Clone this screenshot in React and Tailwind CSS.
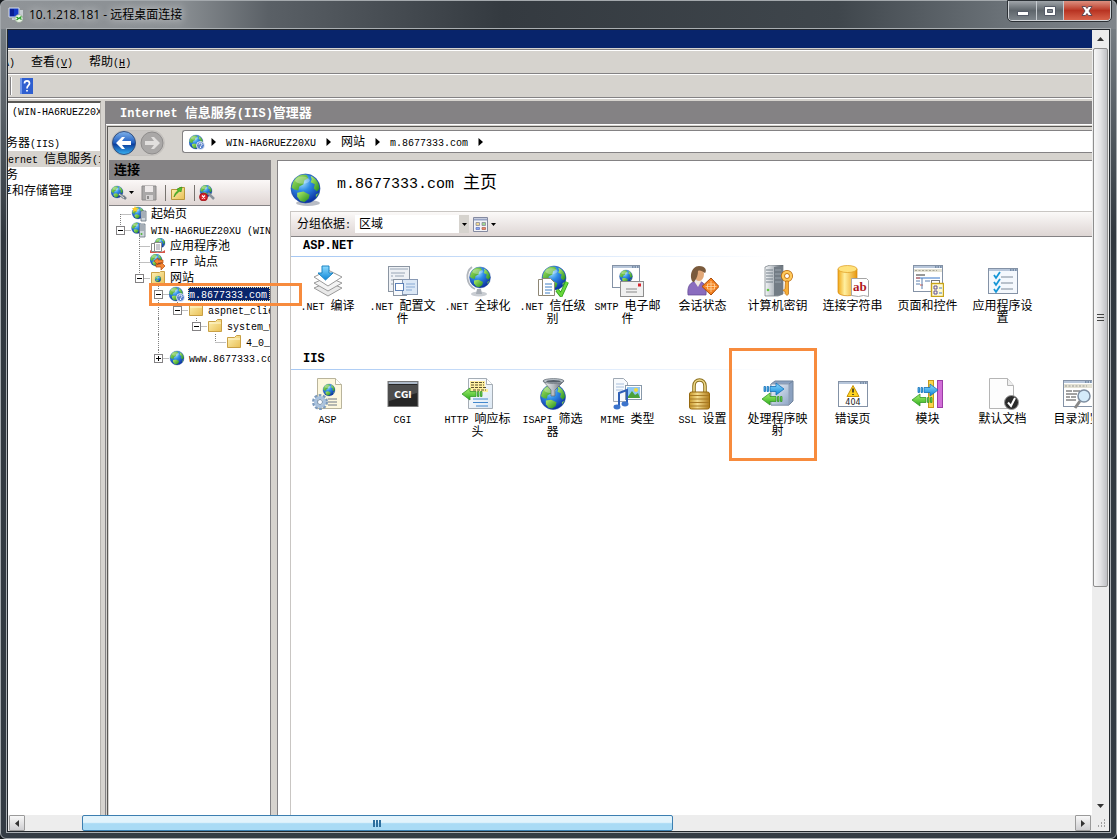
import React, { useState } from 'react';

const CJK = "font-['Liberation_Sans','Noto_Sans_CJK_SC',sans-serif]";
const MONO = "font-['Liberation_Mono','Noto_Sans_CJK_SC',monospace]";

// Latin runs are half the width of a Chinese character, so they get their own size
function Txt({ children, latin = 'text-[10px]' }) {
  return children.split(/([\x20-\x7e]+)/).filter(Boolean).map((part, i) =>
    /^[\x20-\x7e]/.test(part)
      ? <span key={i} className={`${MONO} ${latin} leading-none`}>{part}</span>
      : <span key={i}>{part}</span>
  );
}

function Gradients() {
  return (
    <svg className="absolute w-0 h-0" aria-hidden="true">
      <defs>
        <radialGradient id="sea" cx="0.38" cy="0.28" r="0.75">
          <stop offset="0" stopColor="#a8e6ff" />
          <stop offset="0.4" stopColor="#2f8be6" />
          <stop offset="1" stopColor="#0a2b9c" />
        </radialGradient>
        <linearGradient id="land" x1="0" y1="0" x2="1" y2="1">
          <stop offset="0" stopColor="#b4ee6a" />
          <stop offset="1" stopColor="#1c8a1c" />
        </linearGradient>
        <linearGradient id="gold" x1="0" y1="0" x2="1" y2="0">
          <stop offset="0" stopColor="#f0a818" />
          <stop offset="0.35" stopColor="#fff0a0" />
          <stop offset="1" stopColor="#e8960c" />
        </linearGradient>
        <linearGradient id="brass" x1="0" y1="0" x2="1" y2="0">
          <stop offset="0" stopColor="#c8982c" />
          <stop offset="0.4" stopColor="#f4dc8c" />
          <stop offset="1" stopColor="#b07c1c" />
        </linearGradient>
        <linearGradient id="folder" x1="0" y1="0" x2="1" y2="1">
          <stop offset="0" stopColor="#fdf2b4" />
          <stop offset="1" stopColor="#e9bf55" />
        </linearGradient>
        <linearGradient id="steel" x1="0" y1="0" x2="1" y2="0">
          <stop offset="0" stopColor="#f4f6f8" />
          <stop offset="0.5" stopColor="#b4bac0" />
          <stop offset="1" stopColor="#59616a" />
        </linearGradient>
        <linearGradient id="blueArrow" x1="0" y1="0" x2="0" y2="1">
          <stop offset="0" stopColor="#8fdcff" />
          <stop offset="1" stopColor="#0c86d8" />
        </linearGradient>
        <linearGradient id="greenArrow" x1="0" y1="0" x2="0" y2="1">
          <stop offset="0" stopColor="#a8f070" />
          <stop offset="1" stopColor="#2cae1c" />
        </linearGradient>
        <linearGradient id="page" x1="0" y1="0" x2="1" y2="1">
          <stop offset="0" stopColor="#ffffff" />
          <stop offset="1" stopColor="#dce8f4" />
        </linearGradient>
        <linearGradient id="panel" x1="0" y1="0" x2="1" y2="1">
          <stop offset="0" stopColor="#f2f6fb" />
          <stop offset="1" stopColor="#8ea6c6" />
        </linearGradient>
        <linearGradient id="navBlue" x1="0" y1="0" x2="0" y2="1">
          <stop offset="0" stopColor="#7fb2ea" />
          <stop offset="0.5" stopColor="#1d5cc0" />
          <stop offset="0.55" stopColor="#0b3c9c" />
          <stop offset="1" stopColor="#38b4f4" />
        </linearGradient>
      </defs>
    </svg>
  );
}

// Globe drawn on a 32 unit circle, placed by centre and scale
function Globe({ x = 16, y = 16, r = 14 }) {
  const s = r / 14;
  return (
    <g transform={`translate(${x} ${y}) scale(${s})`}>
      <circle r="14" fill="url(#sea)" stroke="#1d4aa0" strokeWidth="0.6" />
      <path d="M-12 -6C-9 -12 -4 -14 1 -13L3 -10L-1 -8L-2 -4L-6 -2L-7 2L-11 1L-13.500 -1Z" fill="url(#land)" />
      <path d="M-8 4L-2 3L4 6L3 10L-1 13L-5 12L-8 8Z" fill="url(#land)" />
      <path d="M5 -12C10 -10 13 -6 13.500 0L11 3L8 0L9 -4L5 -6L6 -9Z" fill="url(#land)" />
      <path d="M10 6L13 4L10 9Z" fill="url(#land)" />
      <ellipse cx="-3" cy="-8" rx="7" ry="3.500" fill="#fff" opacity="0.3" />
    </g>
  );
}

function Arrow({ dir, x, y }) {
  return dir === 'right' ? (
    <g transform={`translate(${x} ${y})`} fill="url(#blueArrow)" stroke="#1470b8" strokeWidth="0.8">
      <path d="M0 3.500h1.500v5H0zM3 3.500h1.500v5H3zM6 3.500h6V0l8 6l-8 6V8.500H6z" />
    </g>
  ) : (
    <g transform={`translate(${x} ${y})`} fill="url(#greenArrow)" stroke="#35982a" strokeWidth="0.8">
      <path d="M20 3.500h-1.500v5H20zM17 3.500h-1.500v5H17zM14 3.500H8V0L0 6l8 6V8.500h6z" />
    </g>
  );
}

function MiniWindow({ x = 1, y = 3, w = 30, h = 25, fill = '#fff' }) {
  return (
    <g>
      <rect x={x + 0.5} y={y + 0.5} width={w - 1} height={h - 1} fill={fill} stroke="#8492a6" />
      <rect x={x + 1} y={y + 1} width={w - 2} height="2" fill="#b7c6da" />
      <path d={`M${x + w - 8} ${y + 2}h1.500m1 0h1.500m1 0h1.500`} stroke="#3f5878" />
    </g>
  );
}

const drawings = {
  compile: (
    <g stroke="#9a9a9a" strokeWidth="1">
      <path d="M2 23l14-6l14 6l-14 8z" fill="#e9e9e9" />
      <path d="M2 18l14-6l14 6l-14 8z" fill="#f4f4f4" />
      <path d="M2 12l14-7l14 7l-14 9z" fill="#fff" />
      <path d="M10 1h7v7h4l-7.500 7L6 8h4z" fill="url(#blueArrow)" stroke="#1b84c4" />
    </g>
  ),
  config: (
    <g>
      <rect x="1.500" y="1.500" width="21" height="25" fill="#eef1f5" stroke="#8b95a2" />
      <path d="M3 4h18M4 8h14M4 11h2M8 11h9M4 15h2M4 19h2" stroke="#98a5b5" />
      <rect x="6.500" y="14.500" width="13" height="16" fill="#f7f9fc" stroke="#8b95a2" />
      <rect x="15.500" y="14.500" width="15" height="15" fill="#dce8f6" stroke="#8899b4" />
      <rect x="8.500" y="18.500" width="8" height="7" fill="#fff" stroke="#5c80b6" />
      <path d="M19 19h9M19 22h9M19 25h6" stroke="#87a9d4" />
    </g>
  ),
  global: (
    <g>
      <ellipse cx="17" cy="29" rx="8" ry="2.500" fill="#c9cdd2" />
      <path d="M15 24h4l1 5h-6z" fill="#a7adb5" />
      <path d="M10 2C3 7 4 20 13 24" fill="none" stroke="#b1b6bd" strokeWidth="1.800" />
      <Globe x={18} y={12.500} r={10.500} />
    </g>
  ),
  trust: (
    <g>
      <Globe x={17} y={13} r={12} />
      <path d="M1.500 14.500h10v16h-10z" fill="#fff" stroke="#8e8775" />
      <path d="M5.500 13.500h8l4 4v13h-12z" fill="#fff" stroke="#8e8775" />
      <path d="M8 19h7M8 22h7M8 25h7M8 28h5" stroke="#3f7ec4" />
      <path d="M20 25l4 5l6-13" fill="none" stroke="#2e9e1e" strokeWidth="4" />
      <path d="M20 25l4 5l6-13" fill="none" stroke="#6ad83c" strokeWidth="2.400" />
    </g>
  ),
  smtp: (
    <g>
      <MiniWindow x={0} y={0} w={28} h={23} />
      <Globe x={14} y={11.500} r={6.500} />
      <rect x="8.500" y="16.500" width="23" height="15" fill="#f0f0f0" stroke="#8d8d8d" />
      <path d="M14 24h11M14 27h11" stroke="#888" />
      <rect x="26" y="18.500" width="3" height="3" fill="#d8232c" />
    </g>
  ),
  session: (
    <g>
      <path d="M1 30c-1-9 2-13 9-14c7 0 10 5 9 14z" fill="#8a6cbe" stroke="#604690" strokeWidth="0.700" />
      <path d="M7 16l4 6l4-7z" fill="#f1e7de" />
      <ellipse cx="12" cy="9" rx="5" ry="7" fill="#e2a878" />
      <path d="M6 17C2 13 4 1 12 1c7 0 8 5 6 7c-3-2-5-3-7-2c0 4-1 7-4 11z" fill="#7a5a3c" />
      <path d="M24 13l8 8.500l-8 8.500l-9-8.500z" fill="#f58220" stroke="#a84a08" />
      <path d="M24 16v11M18.500 21.500h11M20.500 19h7v5h-7z" stroke="#ffd8a4" strokeWidth="0.800" fill="none" />
    </g>
  ),
  machineKey: (
    <g>
      <path d="M3 2l5-2h13v29l-5 2H3z" fill="url(#steel)" stroke="#6d757d" strokeWidth="0.700" />
      <path d="M12 2l9-1v28l-9 2z" fill="#737c85" />
      <path d="M4 5h7M4 8h7M4 11h7M4 14h7M4 17h7" stroke="#75808a" />
      <path d="M13 5h6M13 9h6M13 13h6M13 17h6" stroke="#9ba4ad" />
      <circle cx="6" cy="25" r="1.300" fill="#63c744" />
      <circle cx="25" cy="11" r="4" fill="none" stroke="#b86608" strokeWidth="4" />
      <circle cx="25" cy="11" r="4" fill="none" stroke="#ffc95c" strokeWidth="2.600" />
      <path d="M23.500 16h3v13l-1.500 1.500l-2-2v-2l-2-1l2-2z" fill="#f7ae38" stroke="#b86608" strokeWidth="0.700" />
    </g>
  ),
  connString: (
    <g>
      <path d="M1 4v23c0 5 19 5 19 0V4z" fill="url(#gold)" stroke="#d6870d" strokeWidth="0.700" />
      <ellipse cx="10.500" cy="4" rx="9.500" ry="3.500" fill="#ffe27c" stroke="#dc9b20" strokeWidth="0.700" />
      <path d="M14.500 13.500h15l2 2v16l-5-1l-5 1l-7-1z" fill="#fff" stroke="#a5a5a5" />
      <text x="16" y="26" fontSize="13" fontWeight="bold" fill="#b0181e" fontFamily="Liberation Serif, serif">ab</text>
    </g>
  ),
  pages: (
    <g>
      <MiniWindow x={1} y={0} w={30} h={27} />
      <path d="M2 4h28v3H2z" fill="#e4e2d4" />
      <path d="M3 5.500h22" stroke="#a8a698" strokeDasharray="2 1.500" />
      <path d="M4 10h9" stroke="#333" />
      <path d="M4 13h24" stroke="#3574c9" />
      <path d="M4 13h4M8 20h3" stroke="#e05038" />
      <path d="M10 13v11M4 16h4M4 19h4M13 16h5" stroke="#5a7fae" />
      <rect x="19.500" y="15.500" width="8" height="3" fill="#fff" stroke="#777" />
      <rect x="19.500" y="18.500" width="12" height="13" fill="#fffbd4" stroke="#c7a31a" strokeWidth="1.400" />
      <path d="M22 21h3v3h-3zM22 26h3v3h-3z" fill="none" stroke="#5c4f98" />
      <path d="M27 23h3M27 28h3" stroke="#4d7dc0" />
    </g>
  ),
  settings: (
    <g>
      <MiniWindow x={1} y={3} w={30} h={26} fill="#f4f8fd" />
      <path d="M7 10l2 3l4-6M7 17l2 3l4-6M7 24l2 3l4-6" fill="none" stroke="#1496d6" strokeWidth="1.800" />
      <path d="M14 12h12M14 18h12M14 24h12" stroke="#7d8a9a" />
    </g>
  ),
  asp: (
    <g>
      <path d="M5.500 0.500h18l6 6v24h-24z" fill="#fdf7dd" stroke="#b9b49c" />
      <path d="M23.500 0.500v6h6" fill="#fff" stroke="#b9b49c" />
      <Globe x={17} y={12} r={6} />
      <path d="M16 21h9M16 24h9M16 27h9" stroke="#6d7685" />
      <circle cx="8" cy="24" r="6.500" fill="none" stroke="#7d9bbd" strokeWidth="3" strokeDasharray="2.600 1.480" />
      <circle cx="8" cy="24" r="4.500" fill="none" stroke="#a9c2de" strokeWidth="3" />
      <circle cx="8" cy="24" r="2.500" fill="#fff" stroke="#7693b5" />
    </g>
  ),
  cgi: (
    <g>
      <rect x="1" y="3.500" width="30" height="25" fill="#262626" stroke="#777" />
      <path d="M1.500 4h29v2h-29z" fill="#aebac9" />
      <path d="M2 7h28v8L2 23z" fill="#4d4d4d" />
      <text x="16" y="20" textAnchor="middle" fontSize="9" fontWeight="bold" fill="#fff" fontFamily="DejaVu Sans, sans-serif">CGI</text>
    </g>
  ),
  http: (
    <g>
      <path d="M6.500 0.500h18l6 6v24h-24z" fill="url(#page)" stroke="#a5adb5" />
      <path d="M24.500 0.500v6h6" fill="#fff" stroke="#a5adb5" />
      <path d="M8 3h15v8h3v3H8z" fill="#fff0a0" />
      <path d="M9 4.500h13M9 7h13M9 9.500h16M11 12h13" stroke="#5b5230" strokeDasharray="3 1" />
      <path d="M11 21h15M11 24.500h15M14 28h12" stroke="#4488cc" />
      <Arrow dir="left" x={0} y={10} />
    </g>
  ),
  isapi: (
    <g>
      <Globe x={16} y={19} r={12.500} />
      <path d="M6 3l8 9v6h4v-6l9-9z" fill="url(#steel)" stroke="#5d6670" strokeWidth="0.700" />
      <ellipse cx="16.500" cy="3" rx="10.500" ry="2.400" fill="#bcc4cb" stroke="#5d6670" strokeWidth="0.700" />
      <ellipse cx="16.500" cy="3.300" rx="7.500" ry="1.300" fill="#56606a" />
    </g>
  ),
  mime: (
    <g>
      <path d="M1.500 0.500h10l4 4v19h-14z" fill="#f7fafd" stroke="#a0a9b4" />
      <path d="M4 6h8M4 9h8M4 12h7" stroke="#a8bfdc" />
      <rect x="13.500" y="7.500" width="16" height="14" fill="#fff" stroke="#8899aa" />
      <rect x="15" y="9" width="13" height="11" fill="#8fc8f4" />
      <path d="M15 20l5-7l3 4l3-2l2 5z" fill="#4ba23a" />
      <circle cx="24" cy="12" r="2" fill="#f4d83c" />
      <path d="M7 28V15l8-3v13" fill="none" stroke="#2e5fb6" strokeWidth="2" />
      <ellipse cx="5" cy="29" rx="3.500" ry="2.400" fill="#3c74cc" />
      <ellipse cx="13" cy="26" rx="3.500" ry="2.400" fill="#3c74cc" />
    </g>
  ),
  ssl: (
    <g>
      <path d="M7 15V8c0-8 11-8 11 0v7" fill="none" stroke="#8a6f1c" strokeWidth="3.600" />
      <path d="M7 15V8c0-8 11-8 11 0v7" fill="none" stroke="#efd98c" strokeWidth="1.600" />
      <rect x="2.500" y="14" width="20" height="17" rx="2" fill="url(#brass)" stroke="#97690f" />
      <path d="M3 17.500h19M3 21h19M3 24.500h19M3 28h19" stroke="#a87a24" />
    </g>
  ),
  handler: (
    <g>
      <path d="M9 6l4-3h18v20l-4 4H9z" fill="#8ba1c0" stroke="#71849c" />
      <path d="M9 6h18v21H9z" fill="url(#panel)" stroke="#8d9db2" />
      <path d="M27 6l4-3" stroke="#71849c" />
      <Arrow dir="right" x={2} y={5} />
      <Arrow dir="left" x={0} y={15} />
    </g>
  ),
  error: (
    <g>
      <MiniWindow x={1} y={3} w={30} h={26} />
      <path d="M16 7.500l6 11h-12z" fill="#ffd41f" stroke="#c79206" strokeLinejoin="round" />
      <path d="M16 10.500v4M16 16v1" stroke="#222" strokeWidth="1.500" />
      <text x="16" y="27" textAnchor="middle" fontSize="8" fill="#222" fontFamily="DejaVu Sans, sans-serif">404</text>
    </g>
  ),
  modules: (
    <g>
      <rect x="16.500" y="2.500" width="5" height="27" fill="#f9d64c" stroke="#c79a1c" />
      <rect x="25.500" y="2.500" width="5" height="27" fill="#d26ed8" stroke="#9c3ea6" />
      <Arrow dir="right" x={6} y={6} />
      <Arrow dir="left" x={0} y={16} />
    </g>
  ),
  defaultDoc: (
    <g>
      <path d="M2.500 0.500h18l6 7v23h-24z" fill="#fdfdfd" stroke="#b5b5b5" />
      <path d="M20.500 0.500v7h6" fill="#eee" stroke="#b5b5b5" />
      <circle cx="24.500" cy="24.500" r="7" fill="#2b2b2b" stroke="#999" />
      <path d="M21 24.500l3 3.500l4-8" fill="none" stroke="#fff" strokeWidth="2" />
    </g>
  ),
  browse: (
    <g>
      <MiniWindow x={1} y={2} w={30} h={27} />
      <path d="M2 6h28v4H2z" fill="#e4e2d4" />
      <path d="M3 8h22" stroke="#999" strokeDasharray="2 1.500" />
      <path d="M4 13h6M11 13h7M4 16h11M4 19h4M9 19h5M4 22h10" stroke="#444" />
      <path d="M18 23l-5 7" stroke="#888" strokeWidth="3" />
      <circle cx="22" cy="18" r="6" fill="#d4ebfa" stroke="#7d8da0" strokeWidth="1.500" />
    </g>
  ),
};

const groups = [
  {
    title: 'ASP.NET',
    items: [
      ['compile', '.NET 编译'],
      ['config', '.NET 配置文件'],
      ['global', '.NET 全球化'],
      ['trust', '.NET 信任级别'],
      ['smtp', 'SMTP 电子邮件'],
      ['session', '会话状态'],
      ['machineKey', '计算机密钥'],
      ['connString', '连接字符串'],
      ['pages', '页面和控件'],
      ['settings', '应用程序设置'],
    ],
  },
  {
    title: 'IIS',
    items: [
      ['asp', 'ASP'],
      ['cgi', 'CGI'],
      ['http', 'HTTP 响应标头'],
      ['isapi', 'ISAPI 筛选器'],
      ['mime', 'MIME 类型'],
      ['ssl', 'SSL 设置'],
      ['handler', '处理程序映射'],
      ['error', '错误页'],
      ['modules', '模块'],
      ['defaultDoc', '默认文档'],
      ['browse', '目录浏览'],
    ],
  },
];

// 16px icons for the tree and the toolbars
const small = {
  start: (
    <g>
      <Globe x={7} y={7} r={6} />
      <path d="M4 0l1 2l2 0l-1.500 2l0.500 2l-2-1l-2 1l0.500-2L1 2l2 0z" fill="#ffc928" />
      <path d="M10 5h5v10h-5z" fill="#cdd5dc" stroke="#66717c" strokeWidth="0.800" />
      <path d="M11 7h3M11 9h3M11 11h3" stroke="#6a757f" strokeWidth="0.800" />
    </g>
  ),
  server: (
    <g>
      <Globe x={6} y={6} r={5.500} />
      <path d="M8.500 2h5.500v13H8.500z" fill="#cdd5dc" stroke="#66717c" strokeWidth="0.800" />
      <path d="M9 4h4M9 6h4M9 8h4" stroke="#6a757f" strokeWidth="0.800" />
      <circle cx="10.500" cy="12" r="1" fill="#52b43a" />
    </g>
  ),
  pool: (
    <g>
      <path d="M0 12c3 3 12 3 15 0v3H0z" fill="#d8564a" />
      <Globe x={10} y={5} r={5} />
      <path d="M1.500 5.500h7v8h-7z" fill="#fff" stroke="#888" />
      <path d="M4.500 4.500h7v9h-7z" fill="#fff" stroke="#888" />
      <path d="M6 7h4M6 9h4M6 11h4" stroke="#778" strokeWidth="0.800" />
    </g>
  ),
  ftp: (
    <g>
      <Globe x={6} y={6} r={6} />
      <path d="M4 7l4-3v2h5v3H8v2zM15 12l-4-4v2H6v3h5v3z" fill="#f58634" stroke="#b04c10" strokeWidth="0.700" />
    </g>
  ),
  sites: (
    <g>
      <path d="M1.500 2.500h8l1-1h4v13h-13z" fill="url(#folder)" stroke="#c9a045" />
      <Globe x={8} y={9} r={3} />
    </g>
  ),
  siteHelp: (
    <g>
      <Globe x={7} y={8} r={7} />
      <circle cx="11.500" cy="11.500" r="4" fill="#5b83cc" stroke="#fff" strokeWidth="0.800" />
      <path d="M10 10.500c0-2 3-2 3 0c0 1-1.500 1-1.500 2M11.500 13v1" fill="none" stroke="#fff" />
    </g>
  ),
  site: <Globe x={8} y={8} r={7} />,
  folder: (
    <g>
      <path d="M1.500 3.500h7l2-2h4v12h-13z" fill="url(#folder)" stroke="#c9a045" />
      <path d="M2 5h12" stroke="#fff9d8" />
    </g>
  ),
  connect: (
    <g>
      <Globe x={6} y={7} r={6} />
      <path d="M8 9l5 4M12 11l3 3" stroke="#777f88" strokeWidth="2.500" />
      <path d="M8 9l5 4" stroke="#d9dde2" />
    </g>
  ),
  save: (
    <g>
      <path d="M1 1h14v14H1z" fill="#a9a7a7" stroke="#8b8989" />
      <path d="M4 1h8v6H4z" fill="#eeeaea" />
      <path d="M5 10h7v5H5z" fill="#d7d4d4" />
      <path d="M6 11h2v3H6z" fill="#8b8989" />
    </g>
  ),
  up: (
    <g>
      <path d="M1.500 4.500h6l2-2h5v12h-13z" fill="url(#folder)" stroke="#b8963c" />
      <path d="M4 12c1-4 2-5 4-6L7 4l5-2l-1 5l-1-1c-2 1-4 3-6 6z" fill="#4fc02c" stroke="#2b8a16" strokeWidth="0.600" />
    </g>
  ),
  stop: (
    <g>
      <Globe x={7} y={6} r={6} />
      <path d="M9 8l6 6" stroke="#8a929b" strokeWidth="2.500" />
      <circle cx="4.500" cy="12" r="4" fill="#d8232c" stroke="#8e0d14" strokeWidth="0.700" />
      <path d="M3 10.500l3 3M6 10.500l-3 3" stroke="#fff" strokeWidth="1.300" />
    </g>
  ),
};

const Icon16 = ({ name }) => (
  <svg viewBox="0 0 16 16" className="w-4 h-4 shrink-0">{small[name]}</svg>
);

const Caret = () => (
  <svg viewBox="0 0 5 3" className="w-[5px] h-[3px] shrink-0"><path d="M0 0h5L2.500 3z" fill="#000" /></svg>
);

const tree = [
  { guides: [], icon: 'start', label: '起始页', first: true },
  { guides: [], box: '-', icon: 'server', label: 'WIN-HA6RUEZ20XU (WIN', last: true },
  { guides: [0], icon: 'pool', label: '应用程序池' },
  { guides: [0], icon: 'ftp', label: 'FTP 站点' },
  { guides: [0], box: '-', icon: 'sites', label: '网站', last: true },
  { guides: [0, 0], box: '-', icon: 'siteHelp', label: 'm.8677333.com', selected: true },
  { guides: [0, 0, 1], box: '-', icon: 'folder', label: 'aspnet_client', last: true },
  { guides: [0, 0, 1, 0], box: '-', icon: 'folder', label: 'system_web', last: true },
  { guides: [0, 0, 1, 0, 0], icon: 'folder', label: '4_0_30319', last: true },
  { guides: [0, 0], box: '+', icon: 'site', label: 'www.8677333.com', last: true },
];

function TreeRow({ node }) {
  const glyph = (
    <svg viewBox="0 0 15 16" className="block w-[15px] h-4">
      <path d={`M4.500 ${node.first ? 8 : 0}V${node.last ? 8 : 16}M4.500 8.500H15`} stroke="#808080" strokeDasharray="1 1" fill="none" />
      {node.box && <rect x="0.500" y="4.500" width="8" height="8" fill="#fff" stroke="#848284" />}
      {node.box && <path d={node.box === '+' ? 'M2 8.500h5M4.500 6v5' : 'M2 8.500h5'} stroke="#000" />}
    </svg>
  );
  return (
    <li className="flex items-center h-4 pl-[7px] whitespace-nowrap">
      {node.guides.map((on, i) => (
        <span key={i} className="w-[19px] h-4 pl-1 shrink-0">
          {on === 1 && <span className="block h-full border-l border-dotted border-[#808080]" />}
        </span>
      ))}
      {node.box
        ? <button type="button" aria-label={`展开 ${node.label}`} className="shrink-0">{glyph}</button>
        : <span className="shrink-0">{glyph}</span>}
      <Icon16 name={node.icon} />
      <span className={node.selected
        ? 'ml-[3px] pl-px flex-1 h-[14px] leading-[14px] bg-[#08246b] text-white outline-1 -outline-offset-1 outline-dotted outline-[#f7db94]'
        : 'ml-1 leading-4'}>
        <Txt>{node.label}</Txt>
      </span>
    </li>
  );
}

function TitleBar() {
  return (
    <header className="flex items-start h-7 pl-[7px] pr-[5px] shrink-0">
      <div className="flex items-center gap-[5px] h-7">
        <svg viewBox="0 0 16 16" className="w-4 h-4">
          <path d="M1 1h10v9H1z" fill="#1338c4" stroke="#d8dfe8" />
          <path d="M2 2h4v7H2z" fill="#0a1f94" />
          <path d="M12 3h3v6h-3zM4 11h5v2H4z" fill="#c9ced4" />
          <circle cx="11" cy="11.500" r="4" fill="#e8f4e4" stroke="#8a998a" strokeWidth="0.600" />
          <path d="M8.500 10l2 1.500l-2 1.500M13.500 9.500l-2 1.500l2 1.500" fill="none" stroke="#1d9a1d" strokeWidth="1.200" />
        </svg>
        <h1 className="text-xs text-black font-['Open_Sans','Noto_Sans_CJK_SC',sans-serif] [text-shadow:0_0_8px_#ffffff]">10.1.218.181 - 远程桌面连接</h1>
      </div>
      <div className="flex ml-auto h-5 rounded-b-[4px] border border-t-0 border-[#d0d4d8] overflow-hidden divide-x divide-[#c5cacf] outline-1 outline-[#2b3035]">
        <button type="button" aria-label="最小化" className="w-7 flex justify-center bg-linear-to-b from-[#a0a5aa] via-[#5e656b] to-[#7d848a]">
          <svg viewBox="0 0 12 20" className="w-3 h-5"><rect x="0.500" y="10.500" width="11" height="4" fill="#fff" stroke="#555b68" /></svg>
        </button>
        <button type="button" aria-label="最大化" className="w-[27px] flex justify-center bg-linear-to-b from-[#a0a5aa] via-[#5e656b] to-[#7d848a]">
          <svg viewBox="0 0 12 20" className="w-3 h-5">
            <path d="M0.500 5.500h11v9H0.500z" fill="#fff" stroke="#555b68" />
            <path d="M3.500 8.500h5v3h-5z" fill="#7d848a" stroke="#555b68" />
          </svg>
        </button>
        <button type="button" aria-label="关闭" className="w-[46px] flex justify-center bg-linear-to-b from-[#dc8f80] via-[#b83322] to-[#d8624a]">
          <svg viewBox="0 0 12 20" className="w-3 h-5">
            <path d="M1 5.500h3.500L6 7.500L7.500 5.500H11L8 10l3 4.500H7.500L6 12.500L4.500 14.500H1L4 10z" fill="#fff" stroke="#55424e" strokeWidth="0.900" />
          </svg>
        </button>
      </div>
    </header>
  );
}

const Divider = () => (
  <div className="h-0.5 shrink-0 border-t border-[#848284] bg-white" />
);

function MenuBar() {
  return (
    <nav className="flex items-center gap-4 h-[22px] shrink-0 overflow-hidden">
      <button type="button" className="-ml-[11px]"><Txt>(A)</Txt></button>
      <button type="button"><Txt>查看</Txt><span className={`${MONO} text-[10px]`}>(<u>V</u>)</span></button>
      <button type="button"><Txt>帮助</Txt><span className={`${MONO} text-[10px]`}>(<u>H</u>)</span></button>
    </nav>
  );
}

function ServerPane() {
  return (
    <aside className="w-[93px] mr-1 shrink-0 bg-white border-t-2 border-t-[#5a5855] border-r border-r-[#b5b2ad] overflow-hidden">
      <ul className="leading-4 whitespace-nowrap">
        <li className="h-4 pl-1"><Txt>(WIN-HA6RUEZ20X</Txt></li>
        <li className="h-4" />
        <li className="h-4"><span className="-ml-0.5"><Txt>务器(IIS)</Txt></span></li>
        <li className="h-4 bg-[#d6d3ce]"><Txt>ernet 信息服务(I</Txt></li>
        <li className="h-4"><span className="-ml-0.5"><Txt>务</Txt></span></li>
        <li className="h-4"><span className="-ml-2"><Txt>享和存储管理</Txt></span></li>
      </ul>
    </aside>
  );
}

const Crumb = () => (
  <svg viewBox="0 0 5 8" className="w-[5px] h-2 mx-2.5"><path d="M0.500 0v8L5 4z" fill="#000" /></svg>
);

function AddressRow() {
  return (
    <div className="flex items-start h-[33px] pt-[3px] pl-[3px] shrink-0">
      <div className="flex items-center gap-1 rounded-full border border-[#c5c2be] bg-[#c9c6c3]">
        <button type="button" aria-label="后退" className="w-6 h-6">
          <svg viewBox="0 0 24 24" className="w-6 h-6">
            <circle cx="12" cy="12" r="11.500" fill="url(#navBlue)" stroke="#34507e" />
            <path d="M4 12l6-6h3l-3 4h9v4h-9l3 4h-3z" fill="#fff" />
          </svg>
        </button>
        <button type="button" aria-label="前进" className="w-6 h-6">
          <svg viewBox="0 0 24 24" className="w-6 h-6">
            <circle cx="12" cy="12" r="11" fill="#aaa8a7" stroke="#8f8d8c" />
            <path d="M20 12l-6-6h-3l3 4H5v4h9l-3 4h3z" fill="#e2e0de" />
          </svg>
        </button>
      </div>
      <div className="flex items-center flex-1 h-[23px] ml-[17px] pl-1.5 border border-r-0 border-[#848284] rounded-l-[3px] bg-white overflow-hidden whitespace-nowrap">
        <Icon16 name="siteHelp" />
        <span className="-ml-1 flex"><Crumb /></span>
        <a href="#server"><Txt>WIN-HA6RUEZ20XU</Txt></a>
        <Crumb />
        <a href="#sites">网站</a>
        <Crumb />
        <a href="#site"><Txt>m.8677333.com</Txt></a>
        <Crumb />
      </div>
    </div>
  );
}

function Connections() {
  return (
    <section className="relative flex flex-col w-[161px] shrink-0">
      <h2 className="h-5 pl-[5px] leading-5 text-[13px] font-bold bg-[#848284] shrink-0">连接</h2>
      <div className="flex items-center h-[26px] pl-0.5 shrink-0 bg-linear-to-b from-[#fbf8f7] to-[#dfd6d4] border-b border-[#848284]">
        <button type="button" aria-label="连接" className="flex items-center gap-0.5"><Icon16 name="connect" /><Caret /></button>
        <button type="button" aria-label="保存" className="ml-[7px]"><Icon16 name="save" /></button>
        <span className="w-px h-4 ml-2 mr-1 bg-[#77736f]" />
        <button type="button" aria-label="上移"><Icon16 name="up" /></button>
        <span className="w-px h-4 ml-2 mr-1 bg-[#77736f]" />
        <button type="button" aria-label="断开"><Icon16 name="stop" /></button>
      </div>
      <ul className="flex-1 min-h-0 bg-white overflow-hidden">
        {tree.map((node, i) => <TreeRow key={i} node={node} />)}
      </ul>
      <div className="absolute z-10 left-10 top-[123px] w-[153px] h-[23px] border-3 border-[#f78b3d] pointer-events-none" />
    </section>
  );
}

function FeatureGroup({ title, items }) {
  return (
    <section>
      <h3 className="h-[19px] pl-3 leading-[17px]"><Txt latin="text-xs font-bold">{title}</Txt></h3>
      <div className="h-px bg-linear-to-r from-[#a5c7f3] to-white to-60%" />
      <div className="flex h-[93px] pt-2 -ml-px">
        {items.map(([icon, label]) => (
          <div key={icon} className="relative w-[75px] shrink-0">
            <button type="button" className="flex flex-col items-center gap-[3px] w-full px-[3px] leading-3 text-center">
              <svg viewBox="0 0 32 32" className="w-8 h-8 shrink-0">{drawings[icon]}</svg>
              <span><Txt>{label}</Txt></span>
            </button>
            {icon === 'handler' && (
              <div className="absolute -left-[11px] -top-[30px] w-[88px] h-[113px] border-3 border-[#f78b3d] pointer-events-none" />
            )}
          </div>
        ))}
      </div>
    </section>
  );
}

function FeaturePage() {
  const [groupBy, setGroupBy] = useState('area');

  return (
    <main className="flex flex-col flex-1 min-w-0 pl-3 bg-white border-l border-t border-[#848284] overflow-hidden">
      <div className="flex items-start h-[50px] shrink-0">
        <svg viewBox="0 0 32 34" className="w-8 h-[34px] mt-3">
          <ellipse cx="18" cy="30" rx="12" ry="3" fill="#b8bcc4" />
          <Globe x={15.500} y={15.500} r={14.500} />
        </svg>
        <h2 className="ml-[15px] mt-2.5 text-[17px] leading-6"><Txt latin="text-[15px]">m.8677333.com 主页</Txt></h2>
      </div>
      <div className="flex-1 min-h-0 border-l border-t border-[#c9c6c3]">
        <div className="flex items-center h-[25px] pl-1.5 bg-linear-to-b from-[#fbf9f8] to-[#ded6d4] border-b border-[#848284]">
          <label htmlFor="group-by" className="whitespace-nowrap"><Txt>分组依据:</Txt></label>
          <div className="relative w-[114px] ml-1">
            <select id="group-by" value={groupBy} onChange={(e) => setGroupBy(e.target.value)} className="appearance-none block w-full h-[18px] pl-1 bg-white leading-[18px]">
              <option value="area">区域</option>
              <option value="category">类别</option>
            </select>
            <span className="absolute right-0 top-0 flex items-center justify-center w-2.5 h-full bg-[#d6d3ce] pointer-events-none"><Caret /></span>
          </div>
          <button type="button" aria-label="视图" className="flex items-center gap-[3px] ml-1">
            <svg viewBox="0 0 15 15" className="w-[15px] h-[15px]">
              <path d="M0.500 0.500h14v14H0.500z" fill="#f4f4f8" stroke="#848aa0" />
              <path d="M1 2.500h13" stroke="#98a4c4" strokeWidth="2" />
              <path d="M3 5.500h3.500v3H3z" fill="#f0d890" stroke="#8a8a9a" strokeWidth="0.800" />
              <path d="M9 5.500h3.500v3H9z" fill="#a0d890" stroke="#8a8a9a" strokeWidth="0.800" />
              <path d="M3 10.500h3.500v2H3z" fill="#88a8f0" stroke="#6a7ac0" strokeWidth="0.800" />
              <path d="M9 10.500h3.500v2H9z" fill="#f08868" stroke="#b06a5a" strokeWidth="0.800" />
            </svg>
            <Caret />
          </button>
        </div>
        {groups.map((group) => <FeatureGroup key={group.title} {...group} />)}
      </div>
    </main>
  );
}

function ManagerPane() {
  return (
    <div className="flex flex-col flex-1 min-w-0 border-l border-[#848284]">
      <h2 className="h-[23px] pl-3.5 leading-6 shrink-0 text-[13px] font-bold text-white bg-[#848284]">
        <Txt latin="text-xs">Internet 信息服务(IIS)管理器</Txt>
      </h2>
      <div className="h-px shrink-0 bg-white" />
      <div className="flex flex-col flex-1 min-h-0 mt-px ml-px border-l border-t border-[#5a5855]">
        <AddressRow />
        <div className="flex flex-1 min-h-0 pl-px">
          <Connections />
          <div className="w-[7px] shrink-0 border-l border-[#848284]" />
          <FeaturePage />
        </div>
      </div>
    </div>
  );
}

function VerticalScroll() {
  return (
    <div className="flex flex-col w-[17px] shrink-0 bg-[#ededed]">
      <button type="button" aria-label="向上" className="flex items-center justify-center h-[18px]">
        <svg viewBox="0 0 7 4" className="w-[7px] h-1"><path d="M3.500 0L7 4H0z" fill="#333" /></svg>
      </button>
      <div className="flex-1">
        <div className="flex flex-col items-center justify-center gap-0.5 h-[72%] mx-px rounded-[2px] border border-[#8e8e8e] bg-linear-to-r from-[#f7f7f7] via-[#e3e3e5] to-[#bfc0c4]">
          <span className="w-[7px] h-px bg-[#444]" />
          <span className="w-[7px] h-px bg-[#444]" />
          <span className="w-[7px] h-px bg-[#444]" />
        </div>
      </div>
      <button type="button" aria-label="向下" className="flex items-center justify-center h-[18px]">
        <svg viewBox="0 0 7 4" className="w-[7px] h-1"><path d="M3.500 4L7 0H0z" fill="#333" /></svg>
      </button>
    </div>
  );
}

function HorizontalScroll() {
  const end = 'flex items-center justify-center w-4 border border-[#9a9a9a] rounded-[1px] bg-linear-to-b from-[#f8f8f8] to-[#cfcfd2]';
  return (
    <div className="flex h-4 shrink-0 bg-[#ededed]">
      <div className="flex flex-1 pl-px">
        <button type="button" aria-label="向左" className={end}>
          <svg viewBox="0 0 4 7" className="w-1 h-[7px]"><path d="M0 3.500L4 0v7z" fill="#333" /></svg>
        </button>
        <div className="flex flex-1">
          <div className="w-[5.400%]" />
          <div className="flex items-center justify-center gap-px w-[56.300%] border border-[#3c7fb1] rounded-[2px] bg-linear-to-b from-[#e3f4fc] from-45% to-[#a9dbf5] to-55%">
            <span className="w-0.5 h-[7px] bg-[#2d6f9e]" />
            <span className="w-0.5 h-[7px] bg-[#2d6f9e]" />
            <span className="w-0.5 h-[7px] bg-[#2d6f9e]" />
          </div>
        </div>
        <button type="button" aria-label="向右" className={end}>
          <svg viewBox="0 0 4 7" className="w-1 h-[7px]"><path d="M4 3.500L0 0v7z" fill="#333" /></svg>
        </button>
      </div>
      <div className="flex items-end justify-end w-[18px] p-[3px]">
        <svg viewBox="0 0 9 9" className="w-[9px] h-[9px]">
          <path d="M7 1h1M4 4h1M7 4h1M1 7h1M4 7h1M7 7h1" stroke="#a0a0a0" strokeWidth="2" />
        </svg>
      </div>
    </div>
  );
}

function App() {
  return (
    <div className={`${CJK} h-screen bg-[#15191d] text-xs text-black overflow-hidden`}>
      <Gradients />
      <div className="flex flex-col h-full rounded-[6px] border border-[#a4a9ad] bg-linear-to-b from-[#7f868c] via-[#31383f] via-28% to-[#343c44]">
        <div className="-mt-px rounded-t-[6px] border-t border-[#a4a9ad] bg-[linear-gradient(to_right,#909498_0%,#8a8f93_16%,#5a6066_24%,#343a40_45%,#3f464c_75%,#6b7278_90%,#7f858b_100%)]">
          <TitleBar />
        </div>
        <div className="flex flex-col flex-1 min-h-0 -mt-px mx-[5px] mb-[5px] border border-[#a9aeb2]">
          <div className="flex flex-col flex-1 min-h-0 border border-[#22272c]">
            <div className="flex flex-1 min-h-0">
              <div className="flex flex-col flex-1 min-w-0 bg-[#d6d3ce] overflow-hidden">
                <div className="h-[18px] mb-px shrink-0 bg-[#08246b]" />
                <Divider />
                <MenuBar />
                <Divider />
                <div className="flex items-center h-[22px] pl-0.5 shrink-0">
                  <span className="w-0.5 h-[18px] border-l border-[#848284] bg-white" />
                  <button type="button" aria-label="帮助" className="ml-2">
                    <svg viewBox="0 0 13 16" className="w-[13px] h-4">
                      <path d="M0 0h13v16H0z" fill="#2f5fd0" />
                      <path d="M0 0h2v16H0z" fill="#6f96ea" />
                      <path d="M4.500 5.500c0-3.500 5-3.500 5 0c0 2-2.500 2-2.500 5M7 12v1.500" fill="none" stroke="#fff" strokeWidth="1.700" />
                    </svg>
                  </button>
                </div>
                <Divider />
                <div className="flex flex-1 min-h-0 mt-0.5">
                  <ServerPane />
                  <ManagerPane />
                </div>
              </div>
              <VerticalScroll />
            </div>
            <HorizontalScroll />
          </div>
        </div>
      </div>
    </div>
  );
}

export default App;
